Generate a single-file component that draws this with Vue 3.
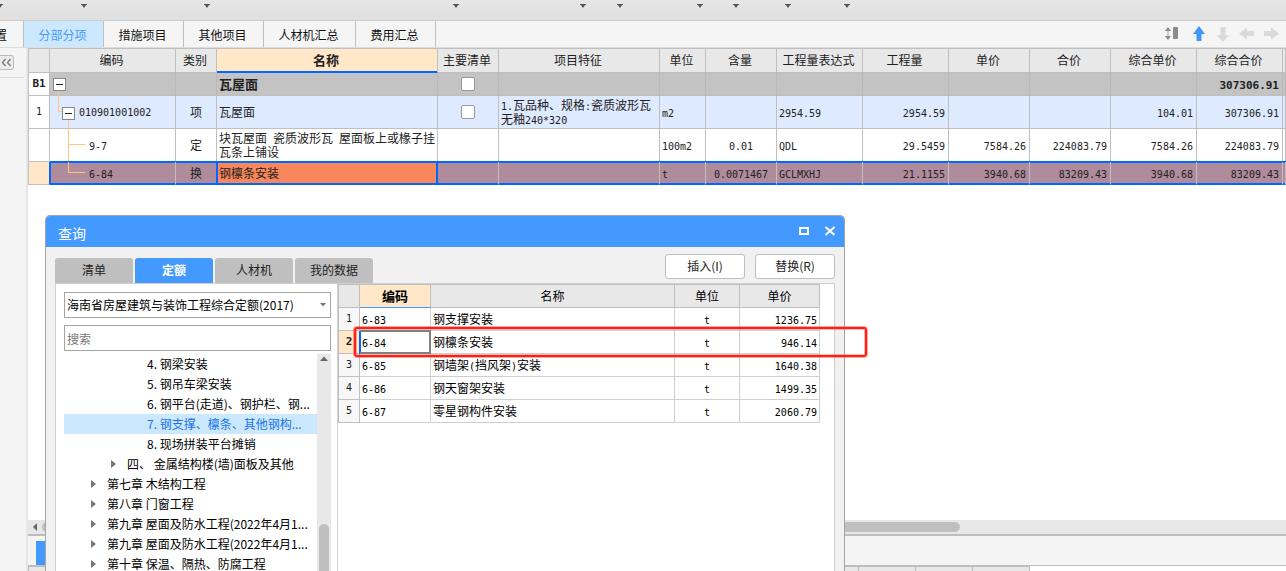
<script setup>
import { ref, h } from 'vue'

// Splits a string so that Latin runs take the half-width face.
const Mixed = (props) =>
  props.text
    .split(/([\x20-\x7e]+)/)
    .filter(Boolean)
    .map((part) => (/^[\x20-\x7e]+$/.test(part) ? h('span', { class: 'latin' }, part) : part))
Mixed.props = ['text']

const menus = [3, 84, 123, 249, 127, 37, 80, 36, 52, 59]

const tabs = [
  { label: '分部分项', size: 'mid' },
  { label: '措施项目', size: 'mid' },
  { label: '其他项目', size: 'mid' },
  { label: '人材机汇总', size: 'wide' },
  { label: '费用汇总', size: 'mid' }
]
const activeTab = ref('分部分项')

const columns = [
  { label: '', width: 21 },
  { label: '编码', width: 126 },
  { label: '类别', width: 41 },
  { label: '名称', width: 221 },
  { label: '主要清单', width: 61 },
  { label: '项目特征', width: 161 },
  { label: '单位', width: 46 },
  { label: '含量', width: 71 },
  { label: '工程量表达式', width: 86 },
  { label: '工程量', width: 86 },
  { label: '单价', width: 81 },
  { label: '合价', width: 81 },
  { label: '综合单价', width: 86 },
  { label: '综合合价', width: 86 }
]

const rows = [
  { kind: 'section', no: 'B1', code: '', type: '', name: '瓦屋面', check: true, feature: '', unit: '', content: '', expr: '', qty: '', price: '', total: '', unitAll: '', sumAll: '307306.91' },
  { kind: 'item', no: '1', code: '010901001002', type: '项', name: '瓦屋面', check: true, feature: '1.瓦品种、规格:瓷质波形瓦无釉240*320', unit: 'm2', content: '', expr: '2954.59', qty: '2954.59', price: '', total: '', unitAll: '104.01', sumAll: '307306.91' },
  { kind: 'quota', no: '', code: '9-7', type: '定', name: '块瓦屋面 瓷质波形瓦 屋面板上或椽子挂瓦条上铺设', feature: '', unit: '100m2', content: '0.01', expr: 'QDL', qty: '29.5459', price: '7584.26', total: '224083.79', unitAll: '7584.26', sumAll: '224083.79' },
  { kind: 'chosen', no: '', code: '6-84', type: '换', name: '钢檩条安装', feature: '', unit: 't', content: '0.0071467', expr: 'GCLMXHJ', qty: '21.1155', price: '3940.68', total: '83209.43', unitAll: '3940.68', sumAll: '83209.43' }
]

const branches = {
  section: 'M8.5 16V23',
  item: 'M8.5 0V15.500H13M18.500 21V33',
  quota: 'M18.500 0V33M18.500 15.500H35',
  chosen: 'M18.500 0V10.500H35'
}

const queryTabs = ['清单', '定额', '人材机', '我的数据']
const activeQuery = ref('定额')
const keyword = ref('')

const tree = [
  { level: 3, text: '4. 钢梁安装' },
  { level: 3, text: '5. 钢吊车梁安装' },
  { level: 3, text: '6. 钢平台(走道)、钢护栏、钢...' },
  { level: 3, text: '7. 钢支撑、檩条、其他钢构...', active: true },
  { level: 3, text: '8. 现场拼装平台摊销' },
  { level: 2, text: '四、 金属结构楼(墙)面板及其他', closed: true },
  { level: 1, text: '第七章 木结构工程', closed: true },
  { level: 1, text: '第八章 门窗工程', closed: true },
  { level: 1, text: '第九章 屋面及防水工程(2022年4月1...', closed: true },
  { level: 1, text: '第九章 屋面及防水工程(2022年4月1...', closed: true },
  { level: 1, text: '第十章 保温、隔热、防腐工程', closed: true }
]

const quotas = [
  { code: '6-83', name: '钢支撑安装', unit: 't', price: '1236.75' },
  { code: '6-84', name: '钢檩条安装', unit: 't', price: '946.14' },
  { code: '6-85', name: '钢墙架(挡风架)安装', unit: 't', price: '1640.38' },
  { code: '6-86', name: '钢天窗架安装', unit: 't', price: '1499.35' },
  { code: '6-87', name: '零星钢构件安装', unit: 't', price: '2060.79' }
]
</script>

<template>
  <div class="app">
    <div class="ribbon">
      <button v-for="(w, i) in menus" :key="i" class="menu" :style="{ width: w + 'px' }" aria-label="更多">
        <svg width="6" height="4" viewBox="0 0 6 4"><path d="M0 0H6V1H5L3.500 3.500H2.500L1 1H0Z" fill="#555" /></svg>
      </button>
    </div>

    <nav class="tabs">
      <button class="tab cut">置</button>
      <button
        v-for="t in tabs"
        :key="t.label"
        class="tab"
        :class="[t.size, { active: activeTab === t.label }]"
        @click="activeTab = t.label"
      >{{ t.label }}</button>
      <div class="tools">
        <button class="tool" aria-label="行高">
          <svg width="18" height="16" viewBox="0 0 18 16"><path d="M3 1L6 5H0ZM3 14L0 10H6Z" fill="#8b8b8b" /><path d="M3 5V10" stroke="#ccc" stroke-width="2" /><rect x="8" y="1" width="5" height="12" rx="1" fill="#8b8b8b" /></svg>
        </button>
        <button class="tool" aria-label="上移">
          <svg width="16" height="16" viewBox="0 0 16 16"><path d="M8 0L14 8H10.500V15H5.500V8H2Z" fill="#4098ff" /></svg>
        </button>
        <button class="tool" aria-label="下移">
          <svg width="16" height="16" viewBox="0 0 16 16"><path d="M8 16L14 9H10.500V1H5.500V9H2Z" fill="#dadada" /></svg>
        </button>
        <button class="tool" aria-label="左移">
          <svg width="16" height="16" viewBox="0 0 16 16"><path d="M0 7.500L8 1.500V5H15V10H8V13.500Z" fill="#dadada" /></svg>
        </button>
        <button class="tool" aria-label="右移">
          <svg width="16" height="16" viewBox="0 0 16 16"><path d="M16 7.500L8 1.500V5H1V10H8V13.500Z" fill="#dadada" /></svg>
        </button>
      </div>
    </nav>

    <div class="work">
      <aside class="rail">
        <div class="rail-top">
          <button class="fold" aria-label="收起">
            <svg width="13" height="13" viewBox="0 0 13 13"><path d="M5.500 3L2.500 6.500L5.500 10M10.500 3L7.500 6.500L10.500 10" fill="none" stroke="#777" stroke-width="1.300" /></svg>
          </button>
        </div>
      </aside>

      <main class="main">
        <div class="sheet">
          <table class="grid">
            <colgroup>
              <col v-for="(c, i) in columns" :key="i" :style="{ width: c.width + 'px' }" />
              <col />
            </colgroup>
            <thead>
              <tr>
                <th v-for="(c, i) in columns" :key="i" :class="{ current: c.label === '名称' }">{{ c.label }}</th>
                <th></th>
              </tr>
            </thead>
            <tbody>
              <tr v-for="(r, i) in rows" :key="i" :class="r.kind">
                <td class="no">{{ r.no }}</td>
                <td class="code">
                  <svg class="branch" width="40" height="33"><path :d="branches[r.kind]" fill="none" stroke="#ffc57a" /></svg>
                  <button v-if="r.check" class="toggle" aria-label="折叠"></button>
                  <Mixed :text="r.code" />
                </td>
                <td class="mid">{{ r.type }}</td>
                <td class="name"><Mixed :text="r.name" /></td>
                <td class="mid"><input v-if="r.check" type="checkbox" class="tick" aria-label="主要清单" /></td>
                <td><Mixed :text="r.feature" /></td>
                <td><Mixed :text="r.unit" /></td>
                <td class="mid"><Mixed :text="r.content" /></td>
                <td><Mixed :text="r.expr" /></td>
                <td class="num"><Mixed :text="r.qty" /></td>
                <td class="num"><Mixed :text="r.price" /></td>
                <td class="num"><Mixed :text="r.total" /></td>
                <td class="num"><Mixed :text="r.unitAll" /></td>
                <td class="num"><Mixed :text="r.sumAll" /></td>
                <td></td>
              </tr>
            </tbody>
          </table>
        </div>
        <div class="hscroll">
          <svg width="14" height="14" viewBox="0 0 14 14"><path d="M9 3V11L5 7Z" fill="#666" /></svg>
          <div class="hthumb"></div>
        </div>
        <div class="detail-tabs"><button class="detail-tab" aria-label="明细"></button></div>
        <div class="detail-grid">
          <span class="lead"></span><span></span><span></span><span></span>
        </div>
      </main>
    </div>

    <section class="dialog" role="dialog" aria-labelledby="dialog-title">
      <header class="title">
        <h1 id="dialog-title">查询</h1>
        <button class="win" aria-label="最大化">
          <svg width="12" height="12" viewBox="0 0 12 12"><path d="M1 1H11V9H1ZM3 3V7H9V3Z" fill="#fff" fill-rule="evenodd" /></svg>
        </button>
        <button class="win" aria-label="关闭">
          <svg width="12" height="12" viewBox="0 0 12 12"><path d="M1.500 1L10.500 9M10.500 1L1.500 9" stroke="#fff" stroke-width="2" /></svg>
        </button>
      </header>
      <div class="bar">
        <div class="query-tabs">
          <button
            v-for="t in queryTabs"
            :key="t"
            class="query-tab"
            :class="{ active: activeQuery === t }"
            @click="activeQuery = t"
          >{{ t }}</button>
        </div>
        <div class="actions">
          <button class="action">插入(I)</button>
          <button class="action">替换(R)</button>
        </div>
      </div>
      <div class="panes">
        <div class="left">
          <div class="picker">
            <select aria-label="定额库"><option>海南省房屋建筑与装饰工程综合定额(2017)</option></select>
            <svg class="caret" width="6" height="4" viewBox="0 0 6 4"><path d="M0 0H6L3 3.500Z" fill="#777" /></svg>
          </div>
          <input v-model="keyword" class="search" type="text" placeholder="搜索" aria-label="搜索" />
          <div class="tree-box">
            <ul class="tree">
              <li v-for="(n, i) in tree" :key="i" :class="['l' + n.level, { active: n.active }]">
                <span class="slot"><svg v-if="n.closed" width="5" height="8" viewBox="0 0 5 8"><path d="M0 0L5 4L0 8Z" fill="#777" /></svg></span>
                <span>{{ n.text }}</span>
              </li>
            </ul>
            <div class="vscroll">
              <svg width="14" height="10" viewBox="0 0 14 10"><path d="M3 7L7 2.500L11 7Z" fill="#666" /></svg>
              <div class="vthumb"></div>
            </div>
          </div>
        </div>
        <div class="results">
          <table class="quota-table">
            <colgroup><col class="c-no" /><col class="c-code" /><col /><col class="c-unit" /><col class="c-price" /></colgroup>
            <thead>
              <tr><th></th><th class="current">编码</th><th>名称</th><th>单位</th><th>单价</th></tr>
            </thead>
            <tbody>
              <tr v-for="(q, i) in quotas" :key="q.code" :class="{ picked: i === 1 }">
                <td class="no">{{ i + 1 }}</td>
                <td class="qcode"><Mixed :text="q.code" /></td>
                <td><Mixed :text="q.name" /></td>
                <td class="mid"><Mixed :text="q.unit" /></td>
                <td class="num"><Mixed :text="q.price" /></td>
              </tr>
            </tbody>
          </table>
          <div class="mark"></div>
        </div>
      </div>
    </section>
  </div>
</template>

<style>
html, body { height: 100%; overflow: hidden; }
.latin { font-family: "DejaVu Sans Mono", monospace; font-size: 10px; line-height: 10px; white-space: pre-wrap; }
</style>

<style scoped>
* { box-sizing: border-box; }
.app {
  position: relative;
  display: flex;
  flex-direction: column;
  height: 100vh;
  overflow: hidden;
  background: #fff;
  color: #222;
  font: 12px/14px "Noto Sans CJK SC", sans-serif;
}
button { margin: 0; padding: 0; border: 0; background: none; color: inherit; font: inherit; }
svg { display: block; flex: none; }

.ribbon {
  display: flex;
  flex: none;
  height: 21px;
  background: linear-gradient(#e6e6e6, #e0e0e0);
  border-bottom: 1px solid #cdcdcd;
}
.menu { display: flex; justify-content: flex-end; flex: none; height: 12px; padding-top: 4px; }

.tabs { display: flex; flex: none; height: 27px; background: #f5f5f5; border-bottom: 1px solid #ddd; color: #111; }
.tab { flex: none; padding-top: 1px; padding-right: 2px; border-right: 1px solid #bfbfbf; }
.tab.mid { width: 80px; }
.tab.wide { width: 92px; }
.tab.cut { display: flex; align-items: center; justify-content: flex-end; width: 24px; padding-right: 16px; }
.tab.active { background: #cce8ff; color: #4499ff; }
.tools { display: flex; align-items: center; gap: 8px; margin-left: auto; padding-right: 7px; }

.work { display: flex; flex: 1; min-height: 0; }
.rail { flex: none; width: 28px; background: #f4f4f4; border-right: 2px solid #e7e7e7; }
.rail-top { height: 30px; margin-right: 2px; padding-top: 7px; border-bottom: 1px solid #ddd; }
.fold { display: block; width: 14px; height: 15px; border: 1px solid #bbb; border-left: 0; border-radius: 0 3px 3px 0; background: #ebebeb; }
.main { display: flex; flex: 1; flex-direction: column; min-width: 0; }
.sheet { flex: 1; min-height: 0; overflow: hidden; }

table { border-spacing: 0; border-collapse: separate; table-layout: fixed; }
th, td { padding: 0 2px; border: 0 solid #bfbfbf; border-width: 0 1px 1px 0; }
th { background: #e8e8e8; font-weight: 400; text-align: center; }
td { padding-right: 0; text-align: left; }
td.mid, td.no { padding: 0; text-align: center; }
td.num { padding-right: 3px; text-align: right; }
td.no { font-family: "DejaVu Sans Mono", monospace; font-size: 10px; }
th.current { background: #ffe7c8; font-size: 13px; font-weight: 700; }

.grid { width: 100%; min-width: 1258px; border-top: 1px solid #bfbfbf; border-left: 1px solid #bfbfbf; }
.grid th { height: 24px; padding: 0 2px 2px 0; }
.grid th.current { border-bottom-color: #0068ff; box-shadow: inset 0 -1px #0068ff; }
.grid td { height: 33px; }
.section td { height: 23px; background: #c3c3c3; border-right-color: #b9b9b9; font-weight: 700; font-size: 13px; }
.section td :deep(.latin) { font-size: 11px; }
.section td.no { background: #fff; font-size: 11px; }
.item td { background: #deeaff; }
.item td.no { background: #fff; }
.chosen td {
  height: 23px;
  background: #b08b9b;
  border-bottom-color: #0068ff;
  box-shadow: 0 -1px #0068ff, inset 0 1px #0068ff, inset 0 -1px #0068ff;
}
.chosen td.no { background: #ffe7c8; border-color: #0068ff; border-bottom-color: #bfbfbf; box-shadow: none; }
.chosen td.code { box-shadow: 0 -1px #0068ff, inset 0 1px #0068ff, inset 0 -1px #0068ff, inset 1px 0 #0068ff; }
.chosen td.name {
  background: #fa875c;
  border-right-color: #0068ff;
  box-shadow: 0 -1px #0068ff, inset 0 0 0 1px #0068ff, -1px 0 #0068ff;
}
.code { position: relative; }
.branch { position: absolute; top: 0; left: 0; overflow: hidden; }
.grid .section .code { padding-left: 3px; }
.grid .item .code { padding-left: 12px; }
.grid .quota .code, .grid .chosen .code { padding-left: 39px; }
.section .branch, .chosen .branch { height: 23px; }
.toggle {
  position: relative;
  width: 13px;
  height: 13px;
  margin-right: 4px;
  border: 1px solid #888;
  background: linear-gradient(#222, #222) center / 7px 1px no-repeat #fff;
  vertical-align: middle;
}
.tick {
  display: block;
  appearance: none;
  width: 14px;
  height: 14px;
  margin: 0 auto;
  border: 1px solid #999;
  border-radius: 2px;
  background: #fff;
}

.hscroll { display: flex; align-items: center; flex: none; height: 16px; background: #e7e7e7; border-bottom: 2px solid #bdbdbd; }
.hthumb { width: 918px; height: 10px; border-radius: 5px; background: #bfbfbf; }
.detail-tabs { display: flex; align-items: flex-end; flex: none; height: 30px; padding-left: 8px; background: #f4f4f4; border-bottom: 1px solid #bdbdbd; }
.detail-tab { width: 80px; height: 24px; background: #4499ff; }
.detail-grid { display: flex; flex: none; height: 5px; border-top: 1px solid #bdbdbd; border-left: 1px solid #bdbdbd; width: max-content; }
.detail-grid span { width: 57px; background: #e7e7e7; border-right: 1px solid #bdbdbd; }
.detail-grid .lead { width: 830px; }

.dialog {
  position: absolute;
  top: 215px;
  bottom: 0;
  left: 45px;
  display: flex;
  flex-direction: column;
  width: 800px;
  background: #f1f1f1;
  border: 1px solid #a5a5a5;
  border-bottom: 0;
  border-radius: 5px 5px 0 0;
}
.title { display: flex; align-items: center; flex: none; gap: 14px; height: 31px; padding: 0 8px 0 12px; border-radius: 4px 4px 0 0; background: #4499ff; color: #fff; }
.title h1 { flex: 1; margin: 0; padding-top: 2px; font-size: 14px; font-weight: 400; line-height: 18px; }
.bar { display: flex; justify-content: space-between; flex: none; height: 36px; padding: 0 9px; }
.query-tabs { display: flex; align-items: flex-end; gap: 2px; }
.query-tab { width: 78px; height: 25px; padding-bottom: 2px; border-radius: 3px 3px 0 0; background: #bfbfbf; }
.query-tab.active { background: #4499ff; color: #fff; font-weight: 700; }
.actions { display: flex; gap: 10px; padding-top: 7px; }
.action { width: 80px; height: 25px; padding-bottom: 1px; border: 1px solid #bfbfbf; border-radius: 3px; background: #fff; }
.panes { display: flex; flex: 1; min-height: 0; margin: 0 9px; background: #fff; border: 1px solid #cfcfcf; border-bottom: 0; color: #000; }
.left { display: flex; flex-direction: column; flex: none; width: 282px; padding: 8px 6px 0 8px; border-right: 1px solid #cfcfcf; }
.picker { position: relative; flex: none; }
.picker select, .search {
  display: block;
  width: 267px;
  height: 26px;
  margin: 0;
  padding: 0 2px;
  border: 1px solid #a5a5a5;
  border-radius: 0;
  appearance: none;
  background: #fff;
  color: #000;
  font: inherit;
}
.caret { position: absolute; top: 11px; right: 5px; }
.search { flex: none; margin-top: 7px; }
.search::placeholder { color: #777; opacity: 1; }
.tree-box { display: flex; flex: 1; width: 267px; min-height: 0; margin-top: 3px; overflow: hidden; }
.tree { flex: 1; margin: 0; padding: 0; list-style: none; }
.tree li { display: flex; align-items: center; height: 20px; white-space: nowrap; }
.tree .l1 { padding-left: 27px; }
.tree .l2 { padding-left: 47px; }
.tree .l3 { padding-left: 67px; }
.tree .active { background: #cce8ff; color: #1a73e8; }
.slot { flex: none; width: 16px; }
.vscroll { display: flex; flex: none; flex-direction: column; align-items: center; gap: 160px; width: 14px; background: #e8e8e8; }
.vthumb { flex: none; width: 10px; height: 60px; border-radius: 5px; background: #bfbfbf; }

.results { position: relative; flex: 1; min-width: 0; }
.quota-table { width: 482px; border-top: 1px solid #bfbfbf; border-left: 1px solid #bfbfbf; }
.quota-table th, .quota-table td { height: 23px; }
.quota-table td { padding-bottom: 1px; border-color: #cfcfcf; }
.quota-table td.no { padding-bottom: 0; background: #f7f7f7; border-color: #bfbfbf; color: #222; }
.quota-table td.num { padding-right: 2px; }
.quota-table th.current { border-bottom-color: #4499ff; }
.quota-table .picked td.no { background: #ffe7c8; font-size: 11px; font-weight: 700; }
.quota-table .picked td.qcode { border-color: #808080; box-shadow: 0 -1px #808080, inset 0 1px #808080, inset -1px -1px #808080, inset 1px 0 #0068ff, -1px 0 #0068ff; }
.c-no { width: 21px; }
.c-code { width: 71px; }
.c-unit { width: 65px; }
.c-price { width: 80px; }
.mark {
  position: absolute;
  top: 43px;
  left: 16px;
  width: 513px;
  height: 30px;
  border: 2px solid #ff2014;
  border-radius: 3px;
  box-shadow: 0 0 0 1px rgba(255, 32, 20, 0.4), inset 0 0 0 1px rgba(255, 32, 20, 0.3);
  pointer-events: none;
}
</style>
